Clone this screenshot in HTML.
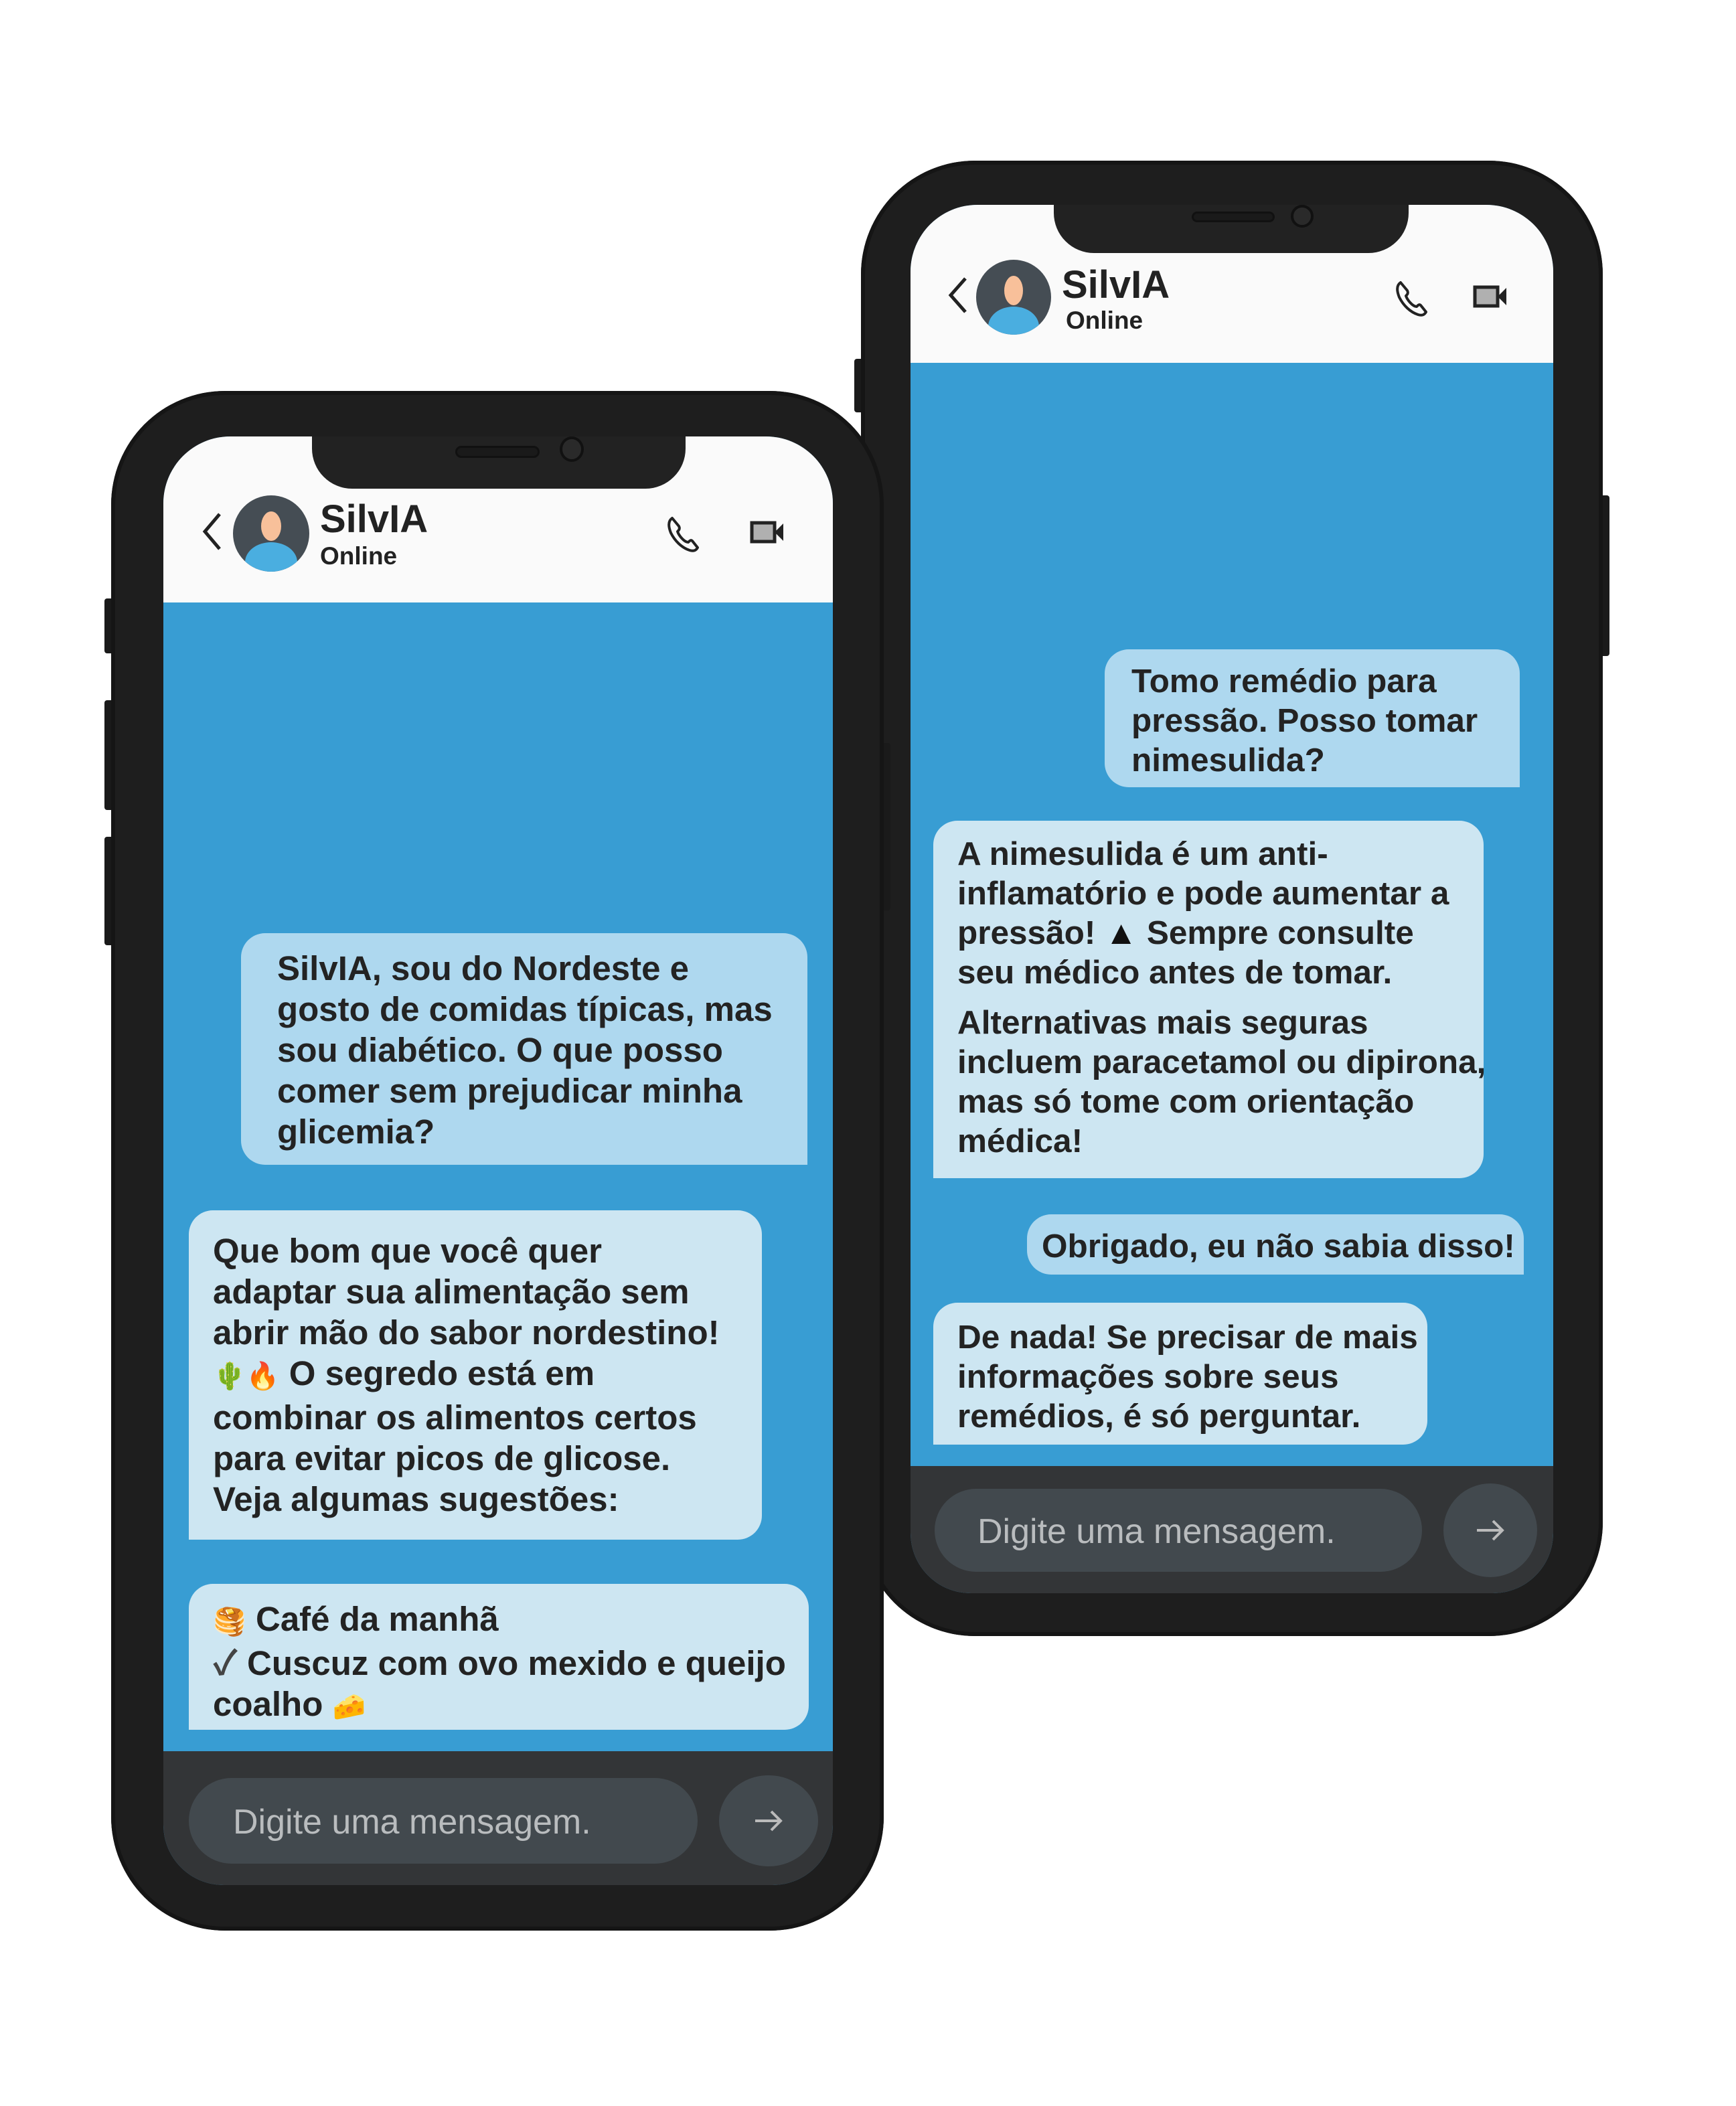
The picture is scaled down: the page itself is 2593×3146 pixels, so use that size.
<!DOCTYPE html>
<html><head><meta charset="utf-8">
<style>
*{margin:0;padding:0;box-sizing:border-box}
html,body{width:2593px;height:3146px;background:#fff;overflow:hidden;font-family:"Liberation Sans","Noto Sans CJK JP",sans-serif}
.abs{position:absolute}
.body{position:absolute;background:#1e1e1e;border-radius:170px;box-shadow:inset 0 0 0 6px #151515}
.btn{position:absolute;background:#1a1a1a;border-radius:4px}
.screen{position:absolute;overflow:hidden;border-radius:100px 100px 90px 90px;background:#389dd3}
.hdr{position:absolute;left:0;top:0;right:0;background:#fafafa}
.notch{position:absolute;background:#222;border-radius:0 0 60px 60px}
.spk{position:absolute;background:#1a1a1a;border:3px solid #111;border-radius:12px}
.cam{position:absolute;border:4px solid #111;border-radius:50%;background:#2a2a2a}
.name{position:absolute;font-size:58px;color:#222;font-weight:bold}
.onl{position:absolute;font-size:37px;color:#222;font-weight:bold}
.bub{position:absolute;color:#232323;font-size:51px;line-height:61px;white-space:nowrap;font-weight:bold}
.u{background:#aed8ef;border-radius:36px 36px 0 36px}
.b{background:#cde6f2;border-radius:36px 36px 36px 0}
.bar{position:absolute;left:0;right:0;bottom:0;background:#333537}
.pill{position:absolute;background:#42494e;border-radius:70px;color:#b9bcbe;font-size:52px}
.send{position:absolute;background:#42494e;border-radius:50%}
.av{position:absolute;border-radius:50%;background:#454d54;overflow:hidden}
.em{font-size:40px;font-weight:normal}
.ck{color:#444}
</style></head><body>

<!-- RIGHT PHONE -->
<div class="btn" style="left:1276px;top:536px;width:14px;height:80px"></div>
<div class="btn" style="left:2390px;top:740px;width:14px;height:240px"></div>
<div class="body" style="left:1286px;top:240px;width:1108px;height:2204px"></div>
<div class="screen" style="left:1360px;top:306px;width:960px;height:2074px">
  <div class="hdr" style="height:236px"></div>
  <div class="notch" style="left:214px;top:0;width:530px;height:72px"></div>
  <div class="spk" style="left:420px;top:10px;width:124px;height:16px"></div>
  <div class="cam" style="left:568px;top:0;width:34px;height:34px"></div>
  <svg class="abs" style="left:52px;top:106px" width="40" height="58" viewBox="0 0 40 58"><path d="M30 4 L8 29 L30 54" fill="none" stroke="#222" stroke-width="5"/></svg>
  <div class="av" style="left:98px;top:82px;width:112px;height:112px">
    <div class="abs" style="left:42px;top:24px;width:28px;height:44px;border-radius:50%;background:#f8c09a"></div>
    <div class="abs" style="left:18px;top:70px;width:76px;height:60px;border-radius:50%;background:#4aaee0"></div>
  </div>
  <div class="name" style="left:226px;top:86px">SilvIA</div>
  <div class="onl" style="left:232px;top:152px">Online</div>
  <svg class="abs" style="left:724px;top:112px" width="50" height="56" viewBox="0 0 50 56"><path d="M8 4 C2 8 2 16 6 26 C12 38 22 48 34 52 C40 54 44 52 46 48 L38 38 C36 36 34 38 32 40 C26 40 18 30 16 24 C18 22 20 20 18 16 Z" fill="none" stroke="#222" stroke-width="4" stroke-linejoin="round"/></svg>
  <svg class="abs" style="left:840px;top:118px" width="54" height="38" viewBox="0 0 54 38"><rect x="3" y="5" width="34" height="28" fill="#b0b0b0" stroke="#222" stroke-width="5"/><path d="M37 19 L50 6 L50 32 Z" fill="#222"/></svg>

  <div class="bub u" style="left:290px;top:664px;width:620px;height:206px;padding:18px 0 0 40px;font-size:49.5px;line-height:59px">Tomo remédio para<br>pressão. Posso tomar<br>nimesulida?</div>
  <div class="bub b" style="left:34px;top:920px;width:822px;height:534px;padding:20px 0 0 36px;font-size:49.5px;line-height:59px">A nimesulida é um anti-<br>inflamatório e pode aumentar a<br>pressão! <span style="color:#111">▲</span> Sempre consulte<br>seu médico antes de tomar.<div style="height:16px"></div>Alternativas mais seguras<br>incluem paracetamol ou dipirona,<br>mas só tome com orientação<br>médica!</div>
  <div class="bub u" style="left:174px;top:1508px;width:742px;height:90px;padding:18px 0 0 22px;font-size:49.5px;line-height:59px">Obrigado, eu não sabia disso!</div>
  <div class="bub b" style="left:34px;top:1640px;width:738px;height:212px;padding:22px 0 0 36px;font-size:49.5px;line-height:59px">De nada! Se precisar de mais<br>informações sobre seus<br>remédios, é só perguntar.</div>

  <div class="bar" style="height:190px"></div>
  <div class="pill" style="left:36px;top:1918px;width:728px;height:124px;padding:34px 0 0 64px">Digite uma mensagem.</div>
  <div class="send" style="left:796px;top:1910px;width:140px;height:140px"></div>
  <svg class="abs" style="left:842px;top:1962px" width="48" height="36" viewBox="0 0 48 36"><path d="M4 18 H42 M28 4 L42 18 L28 32" fill="none" stroke="#bbb" stroke-width="4"/></svg>
</div>

<!-- LEFT PHONE -->
<div class="btn" style="left:156px;top:894px;width:14px;height:82px"></div>
<div class="btn" style="left:156px;top:1046px;width:14px;height:164px"></div>
<div class="btn" style="left:156px;top:1250px;width:14px;height:162px"></div>
<div class="btn" style="left:1316px;top:1110px;width:14px;height:250px"></div>
<div class="body" style="left:166px;top:584px;width:1154px;height:2300px"></div>
<div class="screen" style="left:244px;top:652px;width:1000px;height:2164px">
  <div class="hdr" style="height:248px"></div>
  <div class="notch" style="left:222px;top:0;width:558px;height:78px"></div>
  <div class="spk" style="left:436px;top:14px;width:126px;height:18px"></div>
  <div class="cam" style="left:592px;top:0;width:36px;height:38px"></div>
  <svg class="abs" style="left:54px;top:112px" width="40" height="60" viewBox="0 0 40 60"><path d="M30 4 L8 30 L30 56" fill="none" stroke="#222" stroke-width="5"/></svg>
  <div class="av" style="left:104px;top:88px;width:114px;height:114px">
    <div class="abs" style="left:42px;top:24px;width:30px;height:44px;border-radius:50%;background:#f8c09a"></div>
    <div class="abs" style="left:18px;top:70px;width:78px;height:60px;border-radius:50%;background:#4aaee0"></div>
  </div>
  <div class="name" style="left:234px;top:90px">SilvIA</div>
  <div class="onl" style="left:234px;top:158px">Online</div>
  <svg class="abs" style="left:752px;top:118px" width="50" height="58" viewBox="0 0 50 58"><path d="M8 4 C2 8 2 16 6 26 C12 38 22 48 34 52 C40 54 44 52 46 48 L38 38 C36 36 34 38 32 40 C26 40 18 30 16 24 C18 22 20 20 18 16 Z" fill="none" stroke="#222" stroke-width="4" stroke-linejoin="round"/></svg>
  <svg class="abs" style="left:876px;top:124px" width="54" height="38" viewBox="0 0 54 38"><rect x="3" y="5" width="34" height="28" fill="#b0b0b0" stroke="#222" stroke-width="5"/><path d="M37 19 L50 6 L50 32 Z" fill="#222"/></svg>

  <div class="bub u" style="left:116px;top:742px;width:846px;height:346px;padding:22px 0 0 54px">SilvIA, sou do Nordeste e<br>gosto de comidas típicas, mas<br>sou diabético. O que posso<br>comer sem prejudicar minha<br>glicemia?</div>
  <div class="bub b" style="left:38px;top:1156px;width:856px;height:492px;padding:30px 0 0 36px">Que bom que você quer<br>adaptar sua alimentação sem<br>abrir mão do sabor nordestino!<br><span class="em">🌵🔥</span> O segredo está em<br>combinar os alimentos certos<br>para evitar picos de glicose.<br>Veja algumas sugestões:</div>
  <div class="bub b" style="left:38px;top:1714px;width:926px;height:218px;padding:22px 0 0 36px"><span class="em">🥞</span> Café da manhã<br><span class="ck">✓</span> Cuscuz com ovo mexido e queijo<br>coalho <span class="em">🧀</span></div>

  <div class="bar" style="height:200px"></div>
  <div class="pill" style="left:38px;top:2004px;width:760px;height:128px;padding:36px 0 0 66px">Digite uma mensagem.</div>
  <div class="send" style="left:830px;top:2000px;width:148px;height:136px"></div>
  <svg class="abs" style="left:880px;top:2050px" width="48" height="36" viewBox="0 0 48 36"><path d="M4 18 H42 M28 4 L42 18 L28 32" fill="none" stroke="#bbb" stroke-width="4"/></svg>
</div>
</body></html>
